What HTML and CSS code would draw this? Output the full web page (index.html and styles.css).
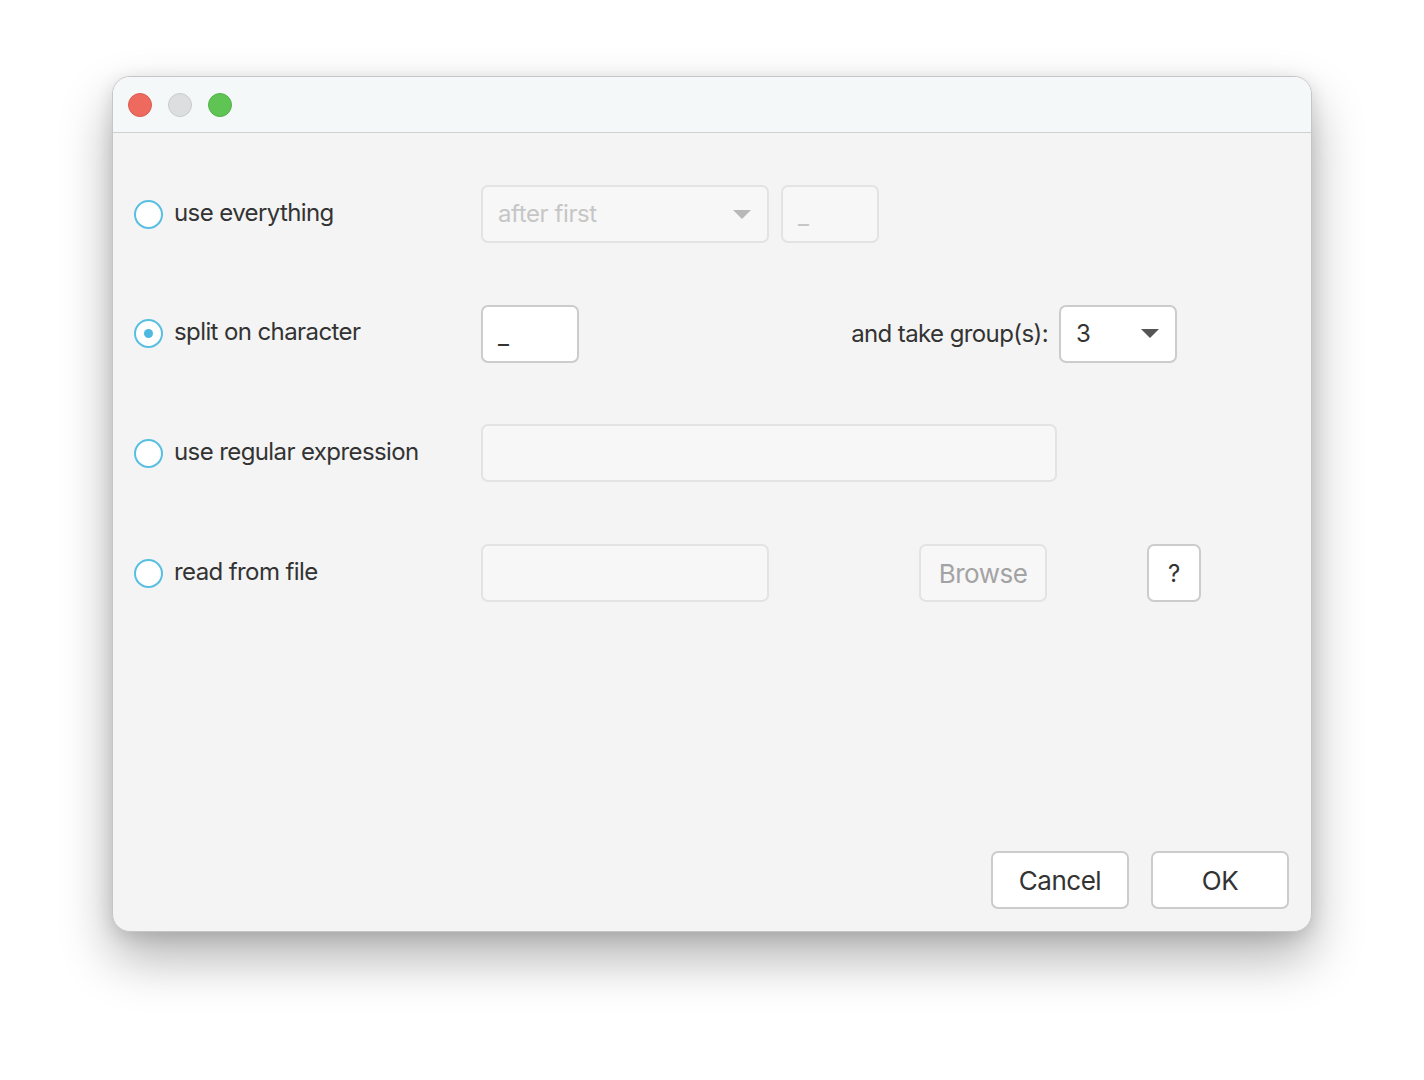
FILE: index.html
```html
<!DOCTYPE html>
<html>
<head>
<meta charset="utf-8">
<link rel="stylesheet" href="styles.css">
</head>
<body>
<div class="window">
  <div class="titlebar">
    <span class="light red"></span>
    <span class="light grey"></span>
    <span class="light green"></span>
  </div>
  <div class="content">
    <div class="form">
      <label class="opt"><span class="radio"></span><span class="opt-text">use everything</span></label>
      <div class="ctrls">
        <div class="combo w288 disabled"><span class="val">after first</span><span class="arrow"></span></div>
        <div class="field w98 disabled gap12"><span class="val">_</span></div>
      </div>

      <label class="opt"><span class="radio checked"></span><span class="opt-text">split on character</span></label>
      <div class="ctrls row2">
        <div class="field w98"><span class="val">_</span></div>
        <span class="lbl">and take group(s):</span>
        <div class="combo w118"><span class="val">3</span><span class="arrow"></span></div>
      </div>

      <label class="opt"><span class="radio"></span><span class="opt-text">use regular expression</span></label>
      <div class="ctrls">
        <div class="field w576 disabled"></div>
      </div>

      <label class="opt"><span class="radio"></span><span class="opt-text">read from file</span></label>
      <div class="ctrls">
        <div class="field w288 disabled"></div>
        <div class="btn browse disabled">Browse</div>
        <div class="btn help">?</div>
      </div>
    </div>
    <div class="footer">
      <div class="btn big">Cancel</div>
      <div class="btn big">OK</div>
    </div>
  </div>
</div>
</body>
</html>
```

FILE: styles.css
```css
html, body {
  margin: 0;
  padding: 0;
  background: #ffffff;
}
body {
  width: 1424px;
  height: 1080px;
  overflow: hidden;
  font-family: "Inter", "Liberation Sans", sans-serif;
  color: #333333;
}
.window {
  margin: 76px 0 0 112px;
  width: 1200px;
  height: 856px;
  box-sizing: border-box;
  border: 1px solid #c6c6c6;
  border-radius: 18px;
  overflow: hidden;
  background: #f4f4f4;
  box-shadow: 0 26px 52px rgba(0, 0, 0, 0.30), 0 4px 18px rgba(0, 0, 0, 0.12);
  display: flex;
  flex-direction: column;
}
.titlebar {
  height: 55px;
  flex: none;
  background: #f5f8f9;
  border-bottom: 1px solid #cfcfcf;
  display: flex;
  align-items: center;
  gap: 16px;
  padding-left: 15px;
}
.light {
  width: 24px;
  height: 24px;
  border-radius: 50%;
  box-sizing: border-box;
}
.red { background: #ee6a5f; border: 1px solid #dc5a50; }
.grey { background: #dcdedf; border: 1px solid #c9cbcc; }
.green { background: #5fc454; border: 1px solid #52b247; }

.content {
  flex: 1;
  display: flex;
  flex-direction: column;
  justify-content: space-between;
  padding: 52px 22px 22px 21px;
}
.form {
  display: grid;
  grid-template-columns: 347px auto;
  grid-auto-rows: 58px;
  row-gap: 61.7px;
  justify-content: start;
}
.opt {
  display: flex;
  align-items: center;
  gap: 11px;
  font-size: 24px;
  letter-spacing: -0.6px;
  color: #333333;
}
.opt-text { margin-top: -4px; }
.radio {
  width: 29px;
  height: 29px;
  box-sizing: border-box;
  border: 2px solid #58bfe2;
  border-radius: 50%;
  background: #ffffff;
  display: flex;
  align-items: center;
  justify-content: center;
  flex: none;
}
.radio.checked::after {
  content: "";
  width: 9px;
  height: 9px;
  border-radius: 50%;
  background: #4db8e0;
}
.ctrls {
  display: flex;
  align-items: stretch;
}
.row2 {
  width: 696px;
  display: grid;
  grid-template-columns: 98px 1fr 118px;
  column-gap: 11px;
  align-items: center;
}
.row2 > .field, .row2 > .combo { height: 58px; }
.lbl {
  justify-self: end;
  font-size: 24px;
  letter-spacing: -0.6px;
  color: #333333;
}
.field, .combo {
  box-sizing: border-box;
  height: 58px;
  border: 2px solid #cccccc;
  border-radius: 7px;
  background: #ffffff;
  display: flex;
  align-items: center;
  padding: 0 16px 0 15px;
  font-size: 24px;
  color: #333333;
}
.field .val { padding-top: 3px; }
.combo { justify-content: space-between; }
.combo .val { margin-top: -1px; letter-spacing: -0.4px; }
.arrow {
  width: 0;
  height: 0;
  border-left: 9px solid transparent;
  border-right: 9px solid transparent;
  border-top: 9px solid #555555;
}
.disabled {
  background: #f7f7f7;
  border-color: #e3e3e3;
  color: #c6c6c6;
}
.combo.disabled .arrow { border-top-color: #b8b8b8; }
.w98 { width: 98px; }
.w118 { width: 118px; }
.w288 { width: 288px; }
.w576 { width: 576px; }
.gap12 { margin-left: 12px; }

.btn {
  box-sizing: border-box;
  height: 58px;
  border: 2px solid #cccccc;
  border-radius: 7px;
  background: #ffffff;
  display: flex;
  align-items: center;
  justify-content: center;
  font-size: 26px;
  letter-spacing: -0.5px;
  color: #333333;
}
.btn.disabled {
  background: #f7f7f7;
  border-color: #e3e3e3;
  color: #a3a3a3;
}
.browse { width: 128px; margin-left: 150px; }
.help { width: 54px; margin-left: 100px; font-size: 24px; }
.footer {
  display: flex;
  justify-content: flex-end;
  gap: 22px;
}
.big { width: 138px; }
```
